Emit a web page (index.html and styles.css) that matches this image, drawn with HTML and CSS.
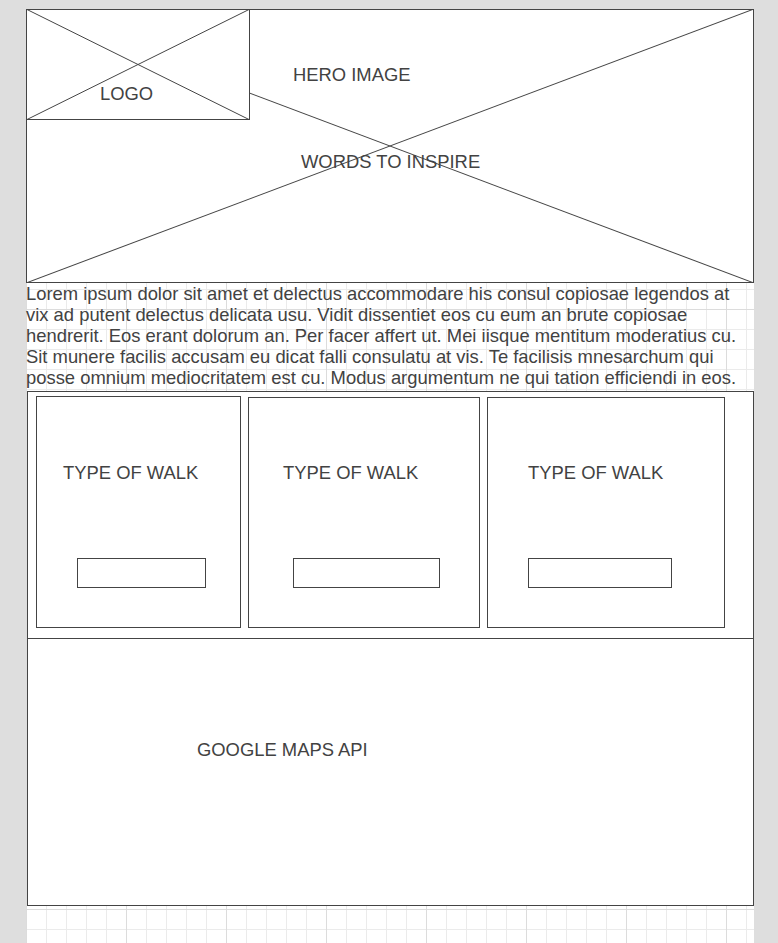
FILE: index.html
```html
<!DOCTYPE html>
<html lang="en">
<head>
    <meta charset="UTF-8">
    <meta name="viewport" content="width=device-width, initial-scale=1.0">
    <title>Walks - Wireframe</title>
    <link rel="stylesheet" href="styles.css">
</head>
<body>
    <div class="canvas">
        <header class="hero">
            <svg class="cross" viewBox="0 0 100 100" preserveAspectRatio="none">
                <line x1="0" y1="0" x2="100" y2="100" />
                <line x1="0" y1="100" x2="100" y2="0" />
            </svg>
            <div class="hero-top">
                <div class="logo">
                    <svg class="cross" viewBox="0 0 100 100" preserveAspectRatio="none">
                        <line x1="0" y1="0" x2="100" y2="100" />
                        <line x1="0" y1="100" x2="100" y2="0" />
                    </svg>
                    <span>LOGO</span>
                </div>
                <h1 class="hero-title">HERO IMAGE</h1>
            </div>
            <p class="hero-words">WORDS TO INSPIRE</p>
        </header>

        <p class="intro">
            Lorem ipsum dolor sit amet et delectus accommodare his consul copiosae legendos at<br>
            vix ad putent delectus delicata usu. Vidit dissentiet eos cu eum an brute copiosae<br>
            hendrerit. Eos erant dolorum an. Per facer affert ut. Mei iisque mentitum moderatius cu.<br>
            Sit munere facilis accusam eu dicat falli consulatu at vis. Te facilisis mnesarchum qui<br>
            posse omnium mediocritatem est cu. Modus argumentum ne qui tation efficiendi in eos.
        </p>

        <section class="walks">
            <div class="walk-card walk-card-1">
                <h3>TYPE OF WALK</h3>
                <div class="walk-btn"></div>
            </div>
            <div class="walk-card walk-card-2">
                <h3>TYPE OF WALK</h3>
                <div class="walk-btn"></div>
            </div>
            <div class="walk-card walk-card-3">
                <h3>TYPE OF WALK</h3>
                <div class="walk-btn"></div>
            </div>
        </section>

        <section class="map">
            <p>GOOGLE MAPS API</p>
        </section>
    </div>
</body>
</html>
```

FILE: styles.css
```css
* { box-sizing: border-box; }
body { margin: 0; background: #dedede; font-family: "Liberation Sans", Arial, sans-serif; font-size: 18.4px; line-height: 21px; color: #424242; }
h1, h3, p { margin: 0; font-size: inherit; font-weight: normal; }

/* grid paper */
.canvas {
    margin: 9px 0 0 26px; width: 728px; min-height: calc(100vh - 9px);
    background-color: #fff;
    background-image:
        linear-gradient(to right, #dcdcdc 1px, transparent 1px),
        linear-gradient(to bottom, #dcdcdc 1px, transparent 1px),
        linear-gradient(to right, #ebebeb 1px, transparent 1px),
        linear-gradient(to bottom, #ebebeb 1px, transparent 1px);
    background-size: 100px 100px, 100px 100px, 20px 20px, 20px 20px;
}

.cross { position: absolute; inset: -1px; width: calc(100% + 2px); height: calc(100% + 2px); }
.cross line { stroke: #444; stroke-width: 1; vector-effect: non-scaling-stroke; }

.hero { position: relative; height: 274px; border: 1px solid #444; background: #fff; }
.hero-top { display: flex; }
.logo { position: relative; width: 223px; height: 110px; border-right: 1px solid #444; border-bottom: 1px solid #444; background: #fff; padding: 73px 0 0 73px; }
.logo span { position: relative; }
.hero-title { position: relative; margin: 54px 0 0 43px; }
.hero-words { position: relative; margin-top: 31px; padding-left: 274px; }

.walks { display: flex; align-items: flex-start; gap: 7px; margin: 3px 0 0 1px; width: 727px; height: 248px; border: 1px solid #444; background: #fff; padding: 4px 0 0 8px; }
.walk-card { display: flex; flex-direction: column; align-items: flex-start; border: 1px solid #444; height: 231px; margin-top: 1px; padding-top: 64px; }
.walk-card h3 { height: 21px; }
.walk-btn { height: 30px; margin-top: 75px; border: 1px solid #444; }
.walk-card-1 { width: 205px; height: 232px; margin-top: 0; padding: 65px 0 0 26px; }
.walk-card-1 .walk-btn { width: 129px; margin-left: 14px; }
.walk-card-2 { width: 232px; padding-left: 34px; }
.walk-card-2 .walk-btn { width: 147px; margin-left: 10px; }
.walk-card-3 { width: 238px; padding-left: 40px; }
.walk-card-3 .walk-btn { width: 144px; margin-left: 0; }

.map { margin-left: 1px; width: 727px; height: 267px; border: 1px solid #444; border-top: none; background: #fff; padding: 100px 0 0 169px; }
```
